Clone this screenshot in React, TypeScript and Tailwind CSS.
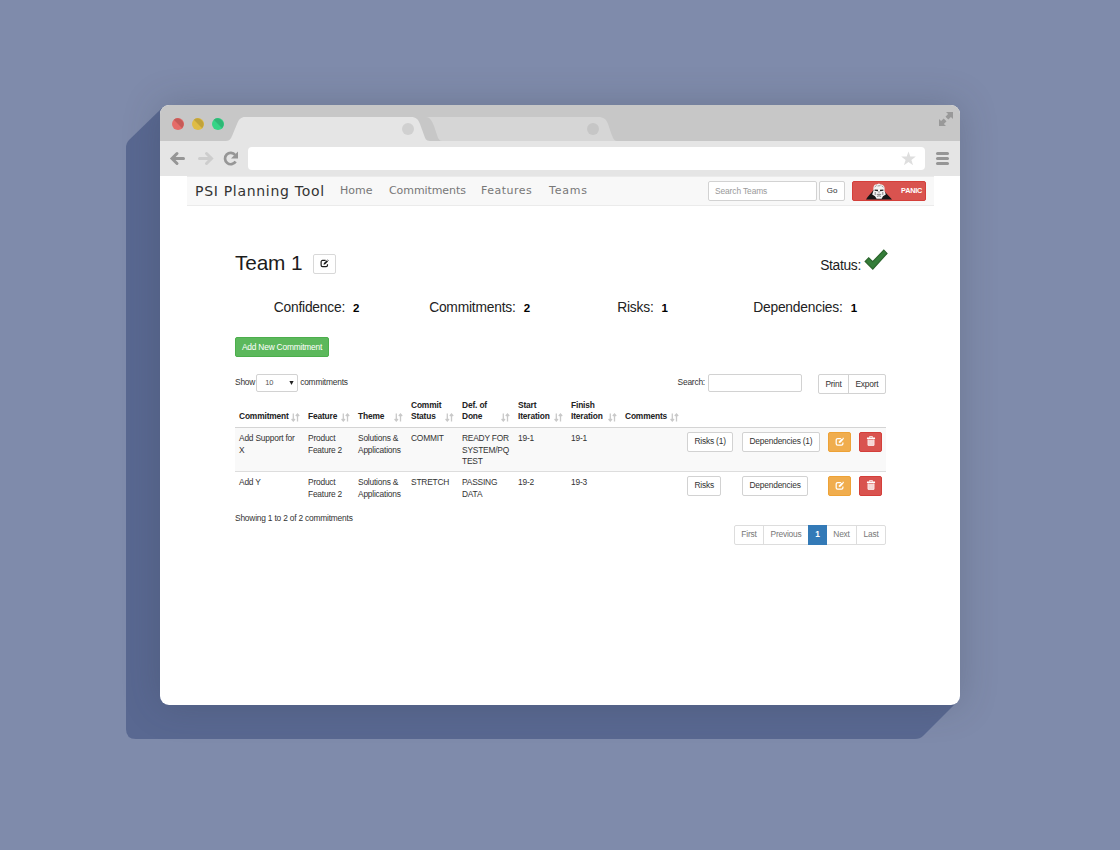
import React from "react";

function EditIcon({ className }: { className?: string }) {
  return (
    <svg viewBox="0 0 16 16" className={className} fill="none" stroke="currentColor">
      <path d="M10 2.6H4.4A2.4 2.4 0 0 0 2 5v6.3a2.4 2.4 0 0 0 2.4 2.4h6.5a2.4 2.4 0 0 0 2.4-2.4V9.2" strokeWidth="2.1" />
      <path d="M6.2 10.3l.8-3 5.1-5.1 2.2 2.2-5.1 5.1z" fill="currentColor" stroke="none" />
      <path d="M12.8 1.5l.8-.8 2.2 2.2-.8.8z" fill="currentColor" stroke="none" />
    </svg>
  );
}

function TrashIcon() {
  return (
    <svg viewBox="0 0 16 16" className="-mt-px h-[10px] w-[10px]" fill="none" stroke="currentColor">
      <path d="M5.6 2.6V1h4.800v1.600" strokeWidth="1.4" />
      <path d="M1.500 2.400h13v2.400h-13z" fill="currentColor" stroke="none" />
      <path d="M2.600 5.500h10.800V14a1.600 1.600 0 0 1-1.600 1.600H4.200A1.600 1.600 0 0 1 2.600 14z" fill="currentColor" fillOpacity="0.65" stroke="none" />
      <path d="M3.400 5.500V15h9.200V5.500M6.500 6.500V14M9.500 6.500V14" strokeWidth="1.100" />
    </svg>
  );
}

function SortIcon() {
  return (
    <svg viewBox="0 0 9 9" className="mb-[1px] h-[9px] w-[9px] shrink-0" fill="none" stroke="#c9c9c9" strokeWidth="1.3">
      <path d="M2.300 .5v7M.6 6l1.700 2L4 6M6.500 8.500v-7M4.800 3l1.700-2 1.700 2" />
    </svg>
  );
}

function PanicPortrait() {
  return (
    <svg viewBox="0 0 28 18" className="h-[18px] w-[28px]">
      <path d="M1 17.500c2-3.500 5-6 7.500-9.500h10c2.500 3.500 5.500 6 8.500 9.500z" fill="#161616" />
      <path d="M8.500 8.500C8 4 9.600 2.400 11.500 2.600L14 1.400l1.800 1.200c2.600-.2 4.400 2 3.700 5.900l1.300 4-2.800 1.700-1.400 2.500h-5L10 14.200l-2.800-1.700z" fill="#f3f3f3" />
      <path d="M9.600 5l2-1.500M12.500 4l3-.4M16.600 3.800l2 1.400M14 9v2.200" stroke="#777" strokeWidth=".7" fill="none" />
      <path d="M9.600 8.200l3.400.3M18.400 8.200l-3.400.3" stroke="#222" strokeWidth="1.300" fill="none" />
      <path d="M10.200 10v3M17.800 10v3M11.800 12.400h4.400M12 14.400l2-.6 2 .6" stroke="#555" strokeWidth=".7" fill="none" />
    </svg>
  );
}

function BrowserChrome() {
  return (
    <>
      <div className="flex h-9 justify-between bg-[#c7c7c7]">
        <svg viewBox="0 0 470 36" className="h-9 w-[470px]">
          <path d="M256 12h182c6 0 8 2 10 7l3 9c2 5 3 8 6 8H270z" fill="#d6d6d6" />
          <path d="M252 12h14c4 0 6 4 8 9l3 9c1 4 3 6 5 6h-20z" fill="#c7c7c7" />
          <path d="M66 36c4 0 5-3 6-5l5-12c2-5 4-7 8-7h166c5 0 7 2 9 7l4 11c1 3 2 6 6 6z" fill="#e5e5e5" />
          <circle cx="248" cy="24" r="6" fill="#d0d0d0" />
          <circle cx="433" cy="24" r="6" fill="#c6c6c6" />
          <circle cx="18" cy="19" r="6" fill="#e56c69" />
          <path d="M13.800 14.800a6 6 0 0 1 8.400 8.400z" fill="#c65b58" />
          <circle cx="38" cy="19" r="6" fill="#dfbc45" />
          <path d="M33.800 14.800a6 6 0 0 1 8.400 8.400z" fill="#c1a33b" />
          <circle cx="58" cy="19" r="6" fill="#35d486" />
          <path d="M53.800 14.800a6 6 0 0 1 8.400 8.400z" fill="#2fb776" />
        </svg>
        <svg viewBox="0 0 14 14" className="mt-[7px] mr-[7px] h-[14px] w-[14px]" fill="#999">
          <path d="M7 0h7v7l-2.100-2.100-2.600 2.600-2.800-2.800 2.600-2.600zM0 7l2.100 2.100 2.600-2.600 2.800 2.800-2.600 2.600L7 14H0z" />
        </svg>
      </div>
      <div className="flex h-[35px] items-center bg-[#e5e5e5]">
        <svg viewBox="0 0 88 35" className="h-[35px] w-[88px] shrink-0" fill="none" strokeWidth="3">
          <path d="M23.500 17.500H12.500M17 12.500l-5 5 5 5" stroke="#969696" strokeLinecap="round" />
          <path d="M39.500 17.500h11.500M46.500 12.500l5 5-5 5" stroke="#cdcdcd" strokeLinecap="round" />
          <path d="M75.200 14a5.700 5.700 0 1 0 .4 6.500" stroke="#969696" strokeWidth="2.700" />
          <path d="M78 10.500v7h-7z" fill="#969696" />
        </svg>
        <div className="flex h-[23px] w-[677px] items-center justify-end rounded-[4px] bg-white pr-[9px]">
          <svg viewBox="0 0 15 15" className="h-[15px] w-[15px]" fill="#dedede">
            <path d="M7.500.4l1.800 5.200h5.500l-4.400 3.300 1.700 5.300-4.600-3.200-4.600 3.200 1.700-5.300L.2 5.600h5.500z" />
          </svg>
        </div>
        <div className="ml-[11px] flex w-[13px] flex-col gap-[2px]">
          <span className="h-[3px] rounded-full bg-[#969696]" />
          <span className="h-[3px] rounded-full bg-[#969696]" />
          <span className="h-[3px] rounded-full bg-[#969696]" />
        </div>
      </div>
    </>
  );
}

function Navbar() {
  return (
    <nav className="mr-[26px] ml-[27px] flex h-[30px] items-center border-t border-b border-[#ebebeb] bg-[#f8f8f8] pl-[8px] font-['DejaVu_Sans',sans-serif] text-[11px] whitespace-nowrap text-[#777]">
      <span className="w-[145px] text-[14px] tracking-[0.7px] text-[#333]">PSI Planning Tool</span>
      <span className="w-[49px] pt-px">Home</span>
      <span className="w-[92px] pt-px tracking-[-0.08px]">Commitments</span>
      <span className="w-[68px] pt-px tracking-[0.5px]">Features</span>
      <span className="w-[159px] pt-px tracking-[0.8px]">Teams</span>
      <div className="flex h-5 w-[109px] items-center rounded-[2px] border border-[#d2d2d2] bg-white pl-[6px] font-['Liberation_Sans',sans-serif] text-[8.400px] tracking-[-0.1px] text-[#999]">Search Teams</div>
      <div className="ml-[2px] flex h-5 w-[26px] items-center justify-center rounded-[2px] border border-[#d2d2d2] bg-white font-['Liberation_Sans',sans-serif] text-[8px] text-[#333]">Go</div>
      <div className="ml-[7px] flex h-5 w-[74px] items-center justify-between rounded-[2px] border border-[#d43f3a] bg-[#d9534f] pr-[3px] pl-[12px] font-['Liberation_Sans',sans-serif] text-[7.300px] font-bold tracking-[-0.25px] text-white">
        <PanicPortrait />
        PANIC
      </div>
    </nav>
  );
}

const stats = [
  { label: "Confidence:", value: "2", width: "w-[163px]" },
  { label: "Commitments:", value: "2", width: "w-[163px]" },
  { label: "Risks:", value: "1", width: "w-[163px]" },
  { label: "Dependencies:", value: "1", width: "w-[162px]" },
];

const columns: { lines: string[] }[] = [
  { lines: ["Commitment"] },
  { lines: ["Feature"] },
  { lines: ["Theme"] },
  { lines: ["Commit", "Status"] },
  { lines: ["Def. of", "Done"] },
  { lines: ["Start", "Iteration"] },
  { lines: ["Finish", "Iteration"] },
  { lines: ["Comments"] },
];

const rows = [
  { cells: [["Add Support for", "X"], ["Product", "Feature 2"], ["Solutions &", "Applications"], ["COMMIT"], ["READY FOR", "SYSTEM/PQ", "TEST"], ["19-1"], ["19-1"], []], risks: "Risks (1)", deps: "Dependencies (1)", tone: "h-[44px] bg-[#f9f9f9]" },
  { cells: [["Add Y"], ["Product", "Feature 2"], ["Solutions &", "Applications"], ["STRETCH"], ["PASSING", "DATA"], ["19-2"], ["19-3"], []], risks: "Risks", deps: "Dependencies", tone: "h-[37px] border-t border-[#ddd]" },
];

const btn = "inline-flex h-5 items-center justify-center rounded-[2px] border border-[#d2d2d2] bg-white px-[6.5px] pt-px text-[#333]";

function CommitmentsTable() {
  return (
    <table className="w-[651px] table-fixed border-collapse text-left leading-[11.5px]">
      <colgroup>
        <col className="w-[69px]" />
        <col className="w-[50px]" />
        <col className="w-[53px]" />
        <col className="w-[51px]" />
        <col className="w-[56px]" />
        <col className="w-[53px]" />
        <col className="w-[54px]" />
        <col className="w-[62px]" />
        <col className="w-[55px]" />
        <col className="w-[86px]" />
        <col className="w-[31px]" />
        <col className="w-[31px]" />
      </colgroup>
      <thead>
        <tr className="h-[32px] border-b border-[#d4d4d4]">
          {columns.map((c) => (
            <th key={c.lines.join()} className="pr-[4px] pb-[4px] pl-[4px] align-bottom font-bold tracking-[-0.15px]">
              <div className="flex items-end justify-between">
                <span className="whitespace-nowrap text-[#222]">
                  {c.lines.map((l) => <span key={l} className="block">{l}</span>)}
                </span>
                <SortIcon />
              </div>
            </th>
          ))}
          <th colSpan={4} />
        </tr>
      </thead>
      <tbody>
        {rows.map((r) => (
          <tr key={r.risks} className={r.tone}>
            {r.cells.map((lines, i) => (
              <td key={i} className="pt-[5.500px] pl-[4px] align-top whitespace-nowrap">
                {lines.map((l) => <span key={l} className="block">{l}</span>)}
              </td>
            ))}
            <td className="pt-[4px] pl-[4px] align-top whitespace-nowrap"><span className={btn}>{r.risks}</span></td>
            <td className="pt-[4px] pl-[4px] align-top whitespace-nowrap"><span className={btn}>{r.deps}</span></td>
            <td className="pt-[4px] pl-[4px] align-top">
              <span className="flex h-5 w-[23px] items-center justify-center rounded-[2px] border border-[#eea236] bg-[#f0ad4e] text-white"><EditIcon className="h-[9.500px] w-[9.500px]" /></span>
            </td>
            <td className="pt-[4px] pl-[4px] align-top">
              <span className="flex h-5 w-[23px] items-center justify-center rounded-[2px] border border-[#d43f3a] bg-[#d9534f] text-white"><TrashIcon /></span>
            </td>
          </tr>
        ))}
      </tbody>
    </table>
  );
}

function TeamPage() {
  return (
    <main className="ml-[75px] w-[651px] pt-[42px] text-[8.400px] leading-[11.5px] tracking-[-0.2px] text-[#333]">
      <div className="flex h-[29px] items-center justify-between tracking-normal text-[#1c1c1c]">
        <div className="flex items-center">
          <h1 className="w-[78px] text-[20.800px] leading-[24px] tracking-[-0.15px] whitespace-nowrap">Team 1</h1>
          <span className="mt-[2px] flex h-5 w-[23px] items-center justify-center rounded-[2px] border border-[#d8d8d8]"><EditIcon className="h-[9px] w-[9px]" /></span>
        </div>
        <div className="-mr-[2px] flex items-center text-[13.800px] tracking-[-0.3px]">
          <span className="pt-[6px]">Status:</span>
          <svg viewBox="0 0 24 22" className="-mt-[5px] ml-[3px] h-[22px] w-[24px]">
            <path d="M1.200 12.500l3.500-3.600 4 3.800L19.800 1.200l3.200 3.200L8.800 20.200z" fill="#347d39" stroke="#2b652c" strokeWidth="1.200" />
          </svg>
        </div>
      </div>
      <div className="mt-[21px] flex h-[20px] items-center tracking-[-0.2px]">
        {stats.map((s) => (
          <div key={s.label} className={`${s.width} flex items-center justify-center text-[13.800px] whitespace-nowrap text-[#222]`}>
            {s.label}
            <b className="ml-[8px] pt-px text-[11.500px] text-black">{s.value}</b>
          </div>
        ))}
      </div>
      <div className="mt-[19px] flex h-5 w-[94px] items-center justify-center rounded-[2px] border border-[#4cae4c] bg-[#5cb85c] pt-px whitespace-nowrap text-white">Add New Commitment</div>
      <div className="mt-[17px] flex h-5">
        <div className="flex h-[18px] items-center">
          Show
          <span className="mr-[2px] ml-px flex h-[18px] w-[42px] items-center justify-between rounded-[2px] border border-[#d2d2d2] bg-white pr-[3px] pl-[8px] text-[7.500px] text-[#555]">
            10
            <svg viewBox="0 0 5 4" className="h-[4px] w-[5px]" fill="#222"><path d="M.4 0h4.200L2.500 4z" /></svg>
          </span>
          commitments
        </div>
        <div className="ml-auto flex h-[18px] items-center">
          Search:
          <span className="ml-[3px] h-[18px] w-[94px] rounded-[2px] border border-[#d2d2d2] bg-white" />
        </div>
        <div className="ml-[16px] flex h-5 w-[68px] rounded-[2px] border border-[#d2d2d2] pt-px">
          <span className="-mt-px flex w-[30px] items-center justify-center border-r border-[#d2d2d2] pt-px">Print</span>
          <span className="flex flex-1 items-center justify-center">Export</span>
        </div>
      </div>
      <div className="mt-px"><CommitmentsTable /></div>
      <div className="mt-[5px]">Showing 1 to 2 of 2 commitments</div>
      <div className="ml-auto flex h-5 w-[152px] rounded-[2px] border border-[#ddd] text-[#777]">
        <span className="flex w-[29px] items-center justify-center border-r border-[#ddd] pt-px">First</span>
        <span className="flex w-[44px] items-center justify-center pt-px">Previous</span>
        <span className="-my-px flex w-[19px] items-center justify-center bg-[#337ab7] pt-px font-bold text-white">1</span>
        <span className="flex w-[30px] items-center justify-center border-r border-[#ddd] pt-px">Next</span>
        <span className="flex flex-1 items-center justify-center pt-px">Last</span>
      </div>
    </main>
  );
}

export default function App() {
  return (
    <div className="relative h-[850px] w-[1120px] overflow-hidden bg-[#7f8bab] pt-[105px] pl-[160px] font-['Liberation_Sans',Arial,sans-serif]">
      <svg viewBox="0 0 1120 850" className="absolute inset-0 h-[850px] w-[1120px]">
        <path d="M162 108L129 140q-3 3-3 8V729q0 10 10 10H915q5 0 8-3L957 702z" fill="#596891" />
      </svg>
      <div className="relative h-[600px] w-[800px] overflow-hidden rounded-[9px] bg-white shadow-[0_0_36px_rgba(50,60,70,0.25)]">
        <BrowserChrome />
        <Navbar />
        <TeamPage />
      </div>
    </div>
  );
}
